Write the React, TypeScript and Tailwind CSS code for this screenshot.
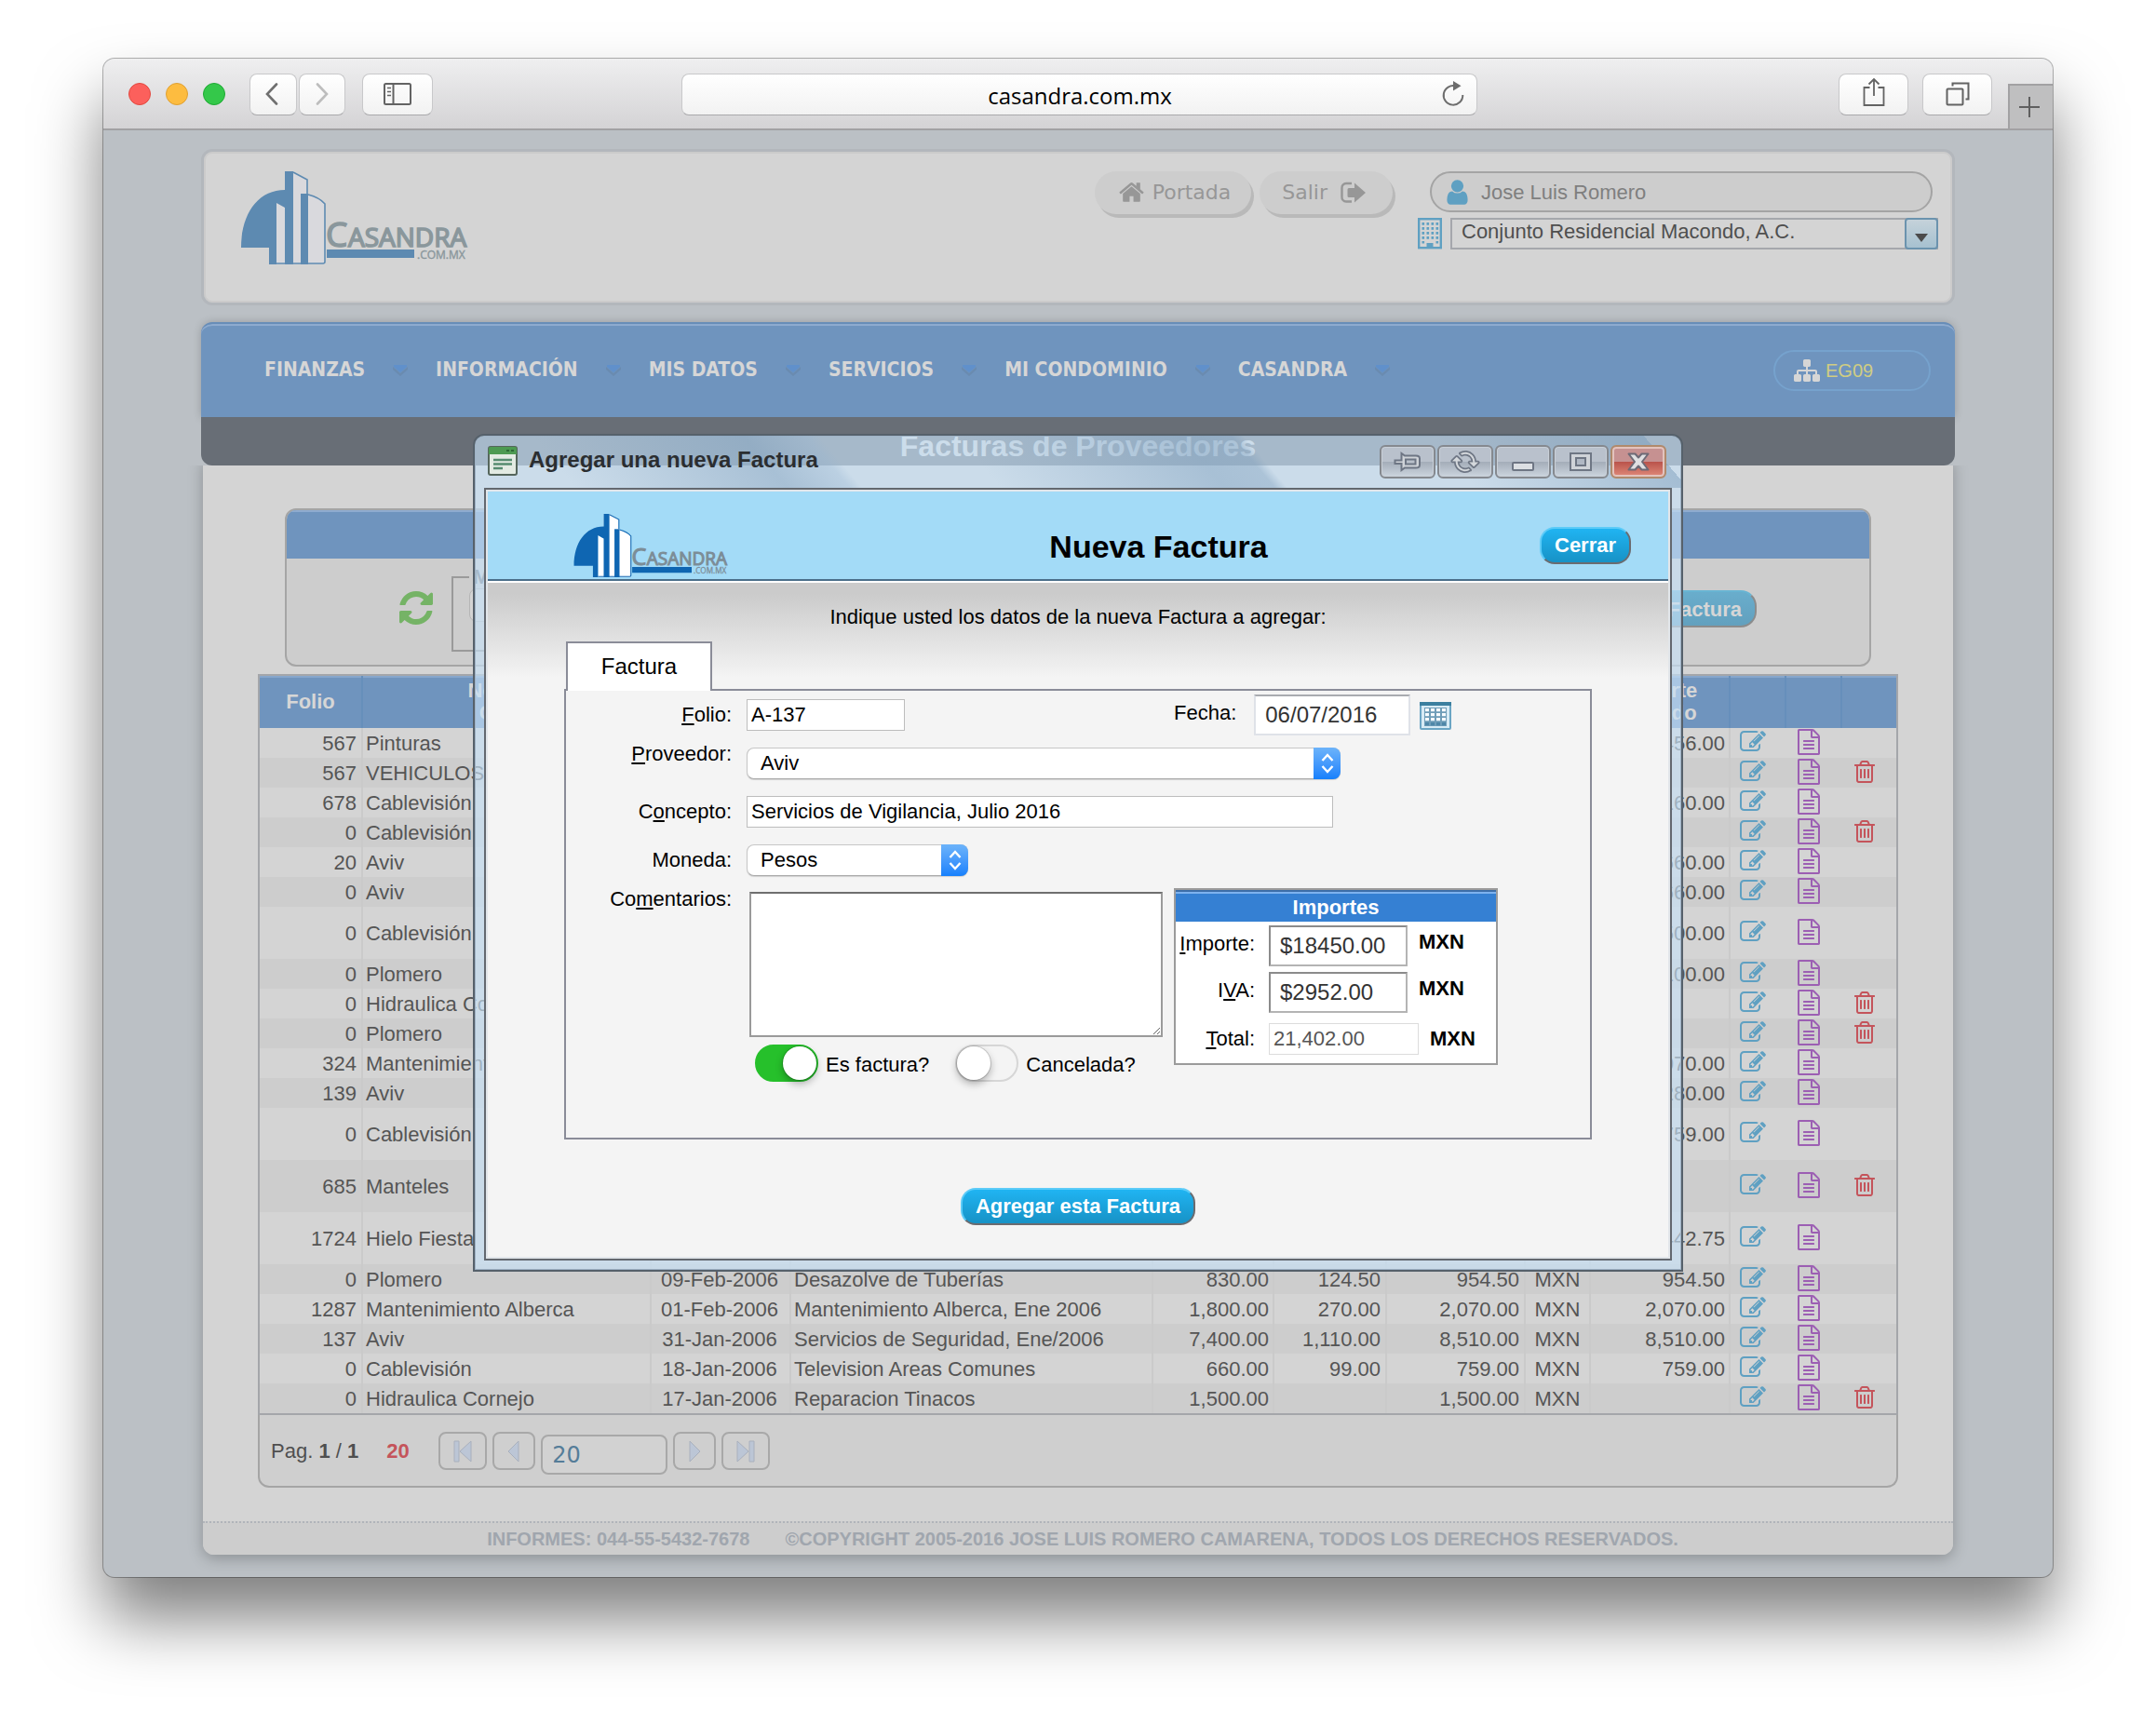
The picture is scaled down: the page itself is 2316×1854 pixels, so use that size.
import type { ReactNode } from 'react'

const ICONS = {
  edit: 'M888 1184l116-116-152-152-116 116v56h96v96h56zm440-720q-16-16-33 1l-350 350q-17 17-1 33t33-1l350-350q17-17 1-33zm80 594v190q0 119-84.5 203.5t-203.5 84.5h-832q-119 0-203.5-84.5t-84.5-203.5v-832q0-119 84.5-203.5t203.5-84.5h832q63 0 117 25 15 7 18 23 3 17-9 29l-49 49q-14 14-32 8-23-6-45-6h-832q-66 0-113 47t-47 113v832q0 66 47 113t113 47h832q66 0 113-47t47-113v-126q0-13 9-22l64-64q15-15 35-7t20 29zm-96-738l288 288-672 672h-288v-288zm444 132l-92 92-288-288 92-92q28-28 68-28t68 28l152 152q28 28 28 68t-28 68z',
  file: 'M1596 380q28 28 48 76t20 88v1152q0 40-28 68t-68 28h-1344q-40 0-68-28t-28-68v-1600q0-40 28-68t68-28h896q40 0 88 20t76 48zm-444-244v376h376q-10-29-22-41l-313-313q-12-12-41-22zm384 1528v-1024h-416q-40 0-68-28t-28-68v-416h-768v1536h1280zm-1024-864q0-14 9-23t23-9h704q14 0 23 9t9 23v64q0 14-9 23t-23 9h-704q-14 0-23-9t-9-23v-64zm736 224q14 0 23 9t9 23v64q0 14-9 23t-23 9h-704q-14 0-23-9t-9-23v-64q0-14 9-23t23-9h704zm0 256q14 0 23 9t9 23v64q0 14-9 23t-23 9h-704q-14 0-23-9t-9-23v-64q0-14 9-23t23-9h704z',
  trash: 'M704 736v576q0 14-9 23t-23 9h-64q-14 0-23-9t-9-23v-576q0-14 9-23t23-9h64q14 0 23 9t9 23zm256 0v576q0 14-9 23t-23 9h-64q-14 0-23-9t-9-23v-576q0-14 9-23t23-9h64q14 0 23 9t9 23zm256 0v576q0 14-9 23t-23 9h-64q-14 0-23-9t-9-23v-576q0-14 9-23t23-9h64q14 0 23 9t9 23zm128 724v-948h-896v948q0 22 7 40.5t14.5 27 10.5 8.5h832q3 0 10.5-8.5t14.5-27 7-40.5zm-672-1076h448l-48-117q-7-9-17-11h-317q-10 2-17 11zm928 32v64q0 14-9 23t-23 9h-96v948q0 83-47 143.5t-113 60.5h-832q-66 0-113-58.5t-47-141.5v-952h-96q-14 0-23-9t-9-23v-64q0-14 9-23t23-9h309l70-167q15-37 54-63t79-26h320q40 0 79 26t54 63l70 167h309q14 0 23 9t9 23z',
  refresh: 'M1639 1056q0 5-1 7-64 268-268 434.5t-478 166.5q-146 0-282.5-55t-243.5-157l-129 129q-19 19-45 19t-45-19-19-45v-448q0-26 19-45t45-19h448q26 0 45 19t19 45-19 45l-137 137q71 66 161 102t187 36q134 0 250-65t186-179q11-17 53-117 8-23 30-23h192q13 0 22.5 9.5t9.5 22.5zm25-800v448q0 26-19 45t-45 19h-448q-26 0-45-19t-19-45 19-45l138-138q-148-137-349-137-134 0-250 65t-186 179q-11 17-53 117-8 23-30 23h-199q-13 0-22.5-9.5t-9.5-22.5v-7q65-268 270-434.5t480-166.5q146 0 284 55.5t245 156.5l130-129q19-19 45-19t45 19 19 45z',
  home: 'M1472 992v480q0 26-19 45t-45 19h-384v-384h-256v384h-384q-26 0-45-19t-19-45v-480q0-1 .5-3t.5-3l575-474 575 474q1 2 1 6zm223-69l-62 74q-8 9-21 11h-3q-13 0-21-7l-692-577-692 577q-12 8-24 7-13-2-21-11l-62-74q-8-10-7-23.5t11-21.5l719-599q32-26 76-26t76 26l244 204v-195q0-14 9-23t23-9h192q14 0 23 9t9 23v408l219 182q10 8 11 21.5t-7 23.5z',
  sitemap: 'M1792 1248v320q0 40-28 68t-68 28h-320q-40 0-68-28t-28-68v-320q0-40 28-68t68-28h96v-192h-512v192h96q40 0 68 28t28 68v320q0 40-28 68t-68 28h-320q-40 0-68-28t-28-68v-320q0-40 28-68t68-28h96v-192h-512v192h96q40 0 68 28t28 68v320q0 40-28 68t-68 28h-320q-40 0-68-28t-28-68v-320q0-40 28-68t68-28h96v-192q0-52 38-90t90-38h512v-192h-96q-40 0-68-28t-28-68v-320q0-40 28-68t68-28h320q40 0 68 28t28 68v320q0 40-28 68t-68 28h-96v192h512q52 0 90 38t38 90v192h96q40 0 68 28t28 68z',
  user: 'M1536 1399q0 109-62.5 187t-150.5 78h-854q-88 0-150.5-78t-62.5-187q0-85 8.5-160.5t31.5-152 58.5-131 94-89 134.5-34.5q131 128 313 128t313-128q76 0 134.5 34.5t94 89 58.5 131 31.5 152 8.5 160.5zm-256-887q0 159-112.5 271.5t-271.5 112.5-271.5-112.5-112.5-271.5 112.5-271.5 271.5-112.5 271.5 112.5 112.5 271.5z',
}

const MENU = ['FINANZAS', 'INFORMACIÓN', 'MIS DATOS', 'SERVICIOS', 'MI CONDOMINIO', 'CASANDRA']

type Row = {
  folio: string
  name: string
  date?: string
  concept?: string
  amount?: string
  tax?: string
  total?: string
  currency?: string
  paid?: string
  trash?: boolean
  tall?: boolean
}

const ROWS: Row[] = [
  { folio: '567', name: 'Pinturas', paid: '456.00' },
  { folio: '567', name: 'VEHICULOS', trash: true },
  { folio: '678', name: 'Cablevisión', paid: '160.00' },
  { folio: '0', name: 'Cablevisión', trash: true },
  { folio: '20', name: 'Aviv', paid: '660.00' },
  { folio: '0', name: 'Aviv', paid: '660.00' },
  { folio: '0', name: 'Cablevisión', paid: '500.00', tall: true },
  { folio: '0', name: 'Plomero', paid: '100.00' },
  { folio: '0', name: 'Hidraulica Cornejo', trash: true },
  { folio: '0', name: 'Plomero', trash: true },
  { folio: '324', name: 'Mantenimiento Alberca', paid: '2,070.00' },
  { folio: '139', name: 'Aviv', paid: '280.00' },
  { folio: '0', name: 'Cablevisión', paid: '759.00', tall: true },
  { folio: '685', name: 'Manteles', trash: true, tall: true },
  { folio: '1724', name: 'Hielo Fiesta', paid: '442.75', tall: true },
  { folio: '0', name: 'Plomero', date: '09-Feb-2006', concept: 'Desazolve de Tuberías', amount: '830.00', tax: '124.50', total: '954.50', currency: 'MXN', paid: '954.50' },
  { folio: '1287', name: 'Mantenimiento Alberca', date: '01-Feb-2006', concept: 'Mantenimiento Alberca, Ene 2006', amount: '1,800.00', tax: '270.00', total: '2,070.00', currency: 'MXN', paid: '2,070.00' },
  { folio: '137', name: 'Aviv', date: '31-Jan-2006', concept: 'Servicios de Seguridad, Ene/2006', amount: '7,400.00', tax: '1,110.00', total: '8,510.00', currency: 'MXN', paid: '8,510.00' },
  { folio: '0', name: 'Cablevisión', date: '18-Jan-2006', concept: 'Television Areas Comunes', amount: '660.00', tax: '99.00', total: '759.00', currency: 'MXN', paid: '759.00' },
  { folio: '0', name: 'Hidraulica Cornejo', date: '17-Jan-2006', concept: 'Reparacion Tinacos', amount: '1,500.00', total: '1,500.00', currency: 'MXN', trash: true },
]

function Icon({ name, className }: { name: keyof typeof ICONS; className: string }) {
  return (
    <svg viewBox="0 0 1792 1792" fill="currentColor" className={className} aria-hidden="true">
      <path d={ICONS[name]} />
    </svg>
  )
}

function Logo({ className, blue, gray, light }: { className: string; blue: string; gray: string; light: string }) {
  return (
    <svg viewBox="0 0 244 100" className={className} role="img" aria-label="Casandra.com.mx">
      <path d="M56 0L71 9V24L90 34V100H38V34L47 39V0z" fill={light} />
      <path d="M0 82C0 46 18 20 47 20V0H56V100H47V39L38 34V100H30V82z" fill={blue} />
      <path d="M64 24H72V100H64z" fill={blue} />
      <path d="M56 1L71 9V24M72 25Q84 28 90 35V97Q90 99 88 99H38" fill="none" stroke={blue} strokeWidth="1.6" />
      <path d="M92 84H186V93H92z" fill={blue} />
      <g fill={gray} className="font-['Open_Sans',sans-serif]">
        <text x="91" y="81" fontSize="37" stroke={gray} strokeWidth="1.6">C</text>
        <text x="115" y="81" fontSize="28" stroke={gray} strokeWidth="1.6">ASANDRA</text>
        <text x="189" y="94" fontSize="12" stroke={gray} strokeWidth="0.4">.COM.MX</text>
      </g>
    </svg>
  )
}

function ToolButton({ label, className, children }: { label: string; className: string; children: ReactNode }) {
  return (
    <button
      type="button"
      aria-label={label}
      className={`flex h-[45px] items-center justify-center rounded-lg border border-[#c8c8ca] border-b-[#a9a9ab] bg-linear-to-b from-white to-[#f2f2f2] ${className}`}
    >
      {children}
    </button>
  )
}

function Toolbar() {
  return (
    <div className="flex h-[77px] items-center rounded-t-xl border-b-2 border-[#a2a1a3] bg-linear-to-b from-[#efeff0] to-[#d4d3d5] pt-px pl-[27px]">
      <div className="flex gap-4">
        <span className="size-6 rounded-full border border-[#e2483f] bg-[#fc605c]" />
        <span className="size-6 rounded-full border border-[#dfa032] bg-[#fdbc40]" />
        <span className="size-6 rounded-full border border-[#1fa934] bg-[#34c84a]" />
      </div>
      <div className="ml-[26px] flex gap-0.5">
        <ToolButton label="Atrás" className="w-[51px]">
          <svg viewBox="0 0 16 24" className="mr-1 h-6 w-4" fill="none" stroke="#6f6f6f" strokeWidth="2.6" strokeLinecap="round">
            <path d="M13 1.5L3 12l10 10.5" />
          </svg>
        </ToolButton>
        <ToolButton label="Adelante" className="w-[50px]">
          <svg viewBox="0 0 16 24" className="h-6 w-4" fill="none" stroke="#bdbdbd" strokeWidth="2.6" strokeLinecap="round">
            <path d="M3 1.5L13 12 3 22.5" />
          </svg>
        </ToolButton>
      </div>
      <ToolButton label="Barra lateral" className="ml-[18px] w-[76px]">
        <svg viewBox="0 0 30 24" className="h-6 w-[30px]" fill="none" stroke="#636363" strokeWidth="2">
          <rect x="1" y="1" width="28" height="22" rx="1.5" />
          <path d="M10.5 1v22" />
          <path d="M4 5.5h4M4 9.5h4M4 13.5h4" strokeWidth="1.6" />
        </svg>
      </ToolButton>
      <div className="flex flex-1 justify-center">
        <div className="mr-[122px] flex h-[45px] w-[855px] items-center rounded-lg border border-[#c8c8ca] border-b-[#a9a9ab] bg-linear-to-b from-white to-[#f2f2f2] pt-1 pr-3 pl-10">
          <input
            aria-label="Dirección"
            defaultValue="casandra.com.mx"
            className="min-w-0 flex-1 bg-transparent text-center font-['Open_Sans','Liberation_Sans',sans-serif] text-2xl text-black outline-none"
          />
          <svg viewBox="0 0 26 28" className="mb-1 h-7 w-[26px]" fill="none" stroke="#6d6d6d" strokeWidth="2">
            <path d="M16 5.5A10.3 10.3 0 1 0 23.3 15" />
            <path d="M13 0l8.5 5.3L13 10.5z" fill="#6d6d6d" stroke="none" />
          </svg>
        </div>
      </div>
      <ToolButton label="Compartir" className="w-[75px]">
        <svg viewBox="0 0 24 32" className="mb-1 h-8 w-6" fill="none" stroke="#636363" strokeWidth="1.8">
          <path d="M7.5 11H1.5v19h21V11h-6M12 20V2M6.5 7.5L12 2l5.5 5.5" />
        </svg>
      </ToolButton>
      <ToolButton label="Pestañas" className="ml-[15px] w-[75px]">
        <svg viewBox="0 0 26 26" className="size-[26px]" fill="none" stroke="#636363" strokeWidth="2">
          <rect x="1.5" y="7.5" width="17" height="17" rx="1" />
          <path d="M7.5 4.5v-3h17v17h-3" />
        </svg>
      </ToolButton>
      <button type="button" aria-label="Nueva pestaña" className="ml-[17px] flex h-[48px] w-12 items-center justify-center self-end border-t-2 border-l-2 border-[#a2a1a3] bg-[#bfbfc0] pr-1">
        <svg viewBox="0 0 22 22" className="size-[22px]" stroke="#5f5f5f" strokeWidth="2">
          <path d="M11 0v22M0 11h22" />
        </svg>
      </button>
    </div>
  )
}

function PageHeader() {
  return (
    <header className="flex h-[168px] items-start rounded-xl border-[3px] border-[#b3b7bc] bg-[#d4d4d4] pt-[21px] pr-[15px] pl-10 inset-ring-2 inset-ring-[#cbcbcb]">
      <Logo className="h-[100px] w-[244px]" blue="#5d8ab1" gray="#8a979c" light="#d9d9dd" />
      <nav className="ml-auto flex gap-[9px] font-['DejaVu_Sans',sans-serif] text-[22px] text-[#979797]">
        <a href="#portada" className="flex h-[46px] items-center gap-2 rounded-full bg-[#cdcdcd] pr-[22px] pb-px pl-[25px] shadow-[3px_4px_0_#b9b9b9]">
          <Icon name="home" className="size-[29px]" />
          Portada
        </a>
        <a href="#salir" className="flex h-[46px] items-center gap-3.5 rounded-full bg-[#cdcdcd] pr-[29px] pb-px pl-6 shadow-[3px_4px_0_#b9b9b9]">
          Salir
          <svg viewBox="0 0 27 24" className="h-6 w-[27px]">
            <path d="M12 2H6a4.5 4.5 0 0 0-4.5 4.5v10A4.500 4.500 0 0 0 6 21.500h6" fill="none" stroke="currentColor" strokeWidth="2.4" />
            <path d="M9 7h6V1.500L27 12 15 22.500V17H9a1.500 1.500 0 0 1-1.500-1.500v-7A1.500 1.500 0 0 1 9 7z" fill="currentColor" />
          </svg>
        </a>
      </nav>
      <div className="ml-[27px] flex flex-col gap-1.5">
        <div className="ml-[13px] flex h-11 w-[540px] items-center gap-2.5 rounded-full border-2 border-[#a4a4a4] bg-[#cdcdcd] pl-3 text-[22px] text-[#7f7f7f]">
          <Icon name="user" className="size-[31px] text-[#5fa0c2]" />
          Jose Luis Romero
        </div>
        <div className="flex items-center gap-[9px]">
          <svg viewBox="0 0 26 34" className="h-[34px] w-[26px] text-[#5fa0c2]" fill="currentColor">
            <rect x="1.2" y="1.2" width="23.6" height="31" fill="none" stroke="currentColor" strokeWidth="2.4" />
            {[5, 10, 15, 20].flatMap((y) => [4.5, 9.5, 14.5, 19.5].map((x) => <rect key={`${x}-${y}`} x={x} y={y} width="2.6" height="2.8" />))}
            <path d="M4.500 25h2.600v2.600h-2.600zM19.500 25h2.600v2.600h-2.600zM9.500 27h7v6h-7z" />
          </svg>
          <div className="relative flex">
            <select aria-label="Condominio" className="h-[34px] w-[524px] appearance-none border-2 border-[#a5a7ac] bg-[#d4d4d4] pb-1 pl-2.5 text-[22px] leading-[26px] text-[#4f4f4f]">
              <option>Conjunto Residencial Macondo, A.C.</option>
            </select>
            <span className="pointer-events-none absolute inset-y-0 right-0 flex w-9 items-center justify-center rounded-sm border-2 border-[#6b93ae] bg-linear-to-b from-[#c5d2da] to-[#a6c1d0] pt-2">
              <svg viewBox="0 0 14 9" className="h-[9px] w-3.5">
                <path d="M0 0h14L7 9z" fill="#4b4b4b" />
              </svg>
            </span>
          </div>
        </div>
      </div>
    </header>
  )
}

function MainNav() {
  return (
    <nav className="flex h-[102px] items-center rounded-t-xl border-t-2 border-[#678db8] bg-[#6f94be] pr-[26px] pl-[68px] shadow-[0_0_10px_rgba(0,0,0,.2)] inset-shadow-[0_2px_0_#8eabcf]">
      {MENU.map((item) => (
        <a key={item} href={`#${item}`} className="flex items-center font-['DejaVu_Sans_Condensed','DejaVu_Sans',sans-serif] text-[21px] font-bold text-[#d6d6d6]">
          {item}
          <svg viewBox="0 0 16 12" className="mx-[30px] h-3 w-4">
            <path d="M0 2v3l8 7 8-7V2L8 9z" fill="#6a8bb0" />
            <path d="M1 0h14v2L8 8 1 2z" fill="#6090cb" />
          </svg>
        </a>
      ))}
      <div className="ml-auto flex h-11 w-[169px] items-center gap-1.5 rounded-full border-2 border-[#76a2cd] pl-5 text-[20px] text-[#d0cd82]">
        <Icon name="sitemap" className="size-7 text-[#d6d6d6]" />
        EG09
      </div>
    </nav>
  )
}

function FilterPanel() {
  return (
    <section className="mx-[29px] overflow-hidden rounded-xl border-2 border-[#a5a5a5] bg-[#cdcdcd]">
      <div className="h-[52px] bg-[#6f94be] inset-shadow-[0_2px_0_#8eabcf]" />
      <div className="flex h-[114px] items-start pr-[121px] pl-[118px]">
        <button type="button" aria-label="Actualizar" className="mt-[32px]">
          <Icon name="refresh" className="size-[42px] text-[#75b366]" />
        </button>
        <fieldset className="mt-[8px] ml-[17px] h-[92px] w-[300px] border-2 border-[#9a9a9a] pl-[17px]">
          <legend className="px-1 text-[22px] leading-6 font-bold text-[#6e747c]">Mes</legend>
          <input aria-label="Mes" className="h-9 w-40 rounded-lg border border-[#b5b5b5] bg-[#d4d4d4]" />
        </fieldset>
        <button type="button" className="mt-[34px] ml-auto h-10 rounded-[17px] border-2 border-t-[#68b4d3] border-r-[#8c8c8c] border-b-[#8c8c8c] border-l-[#68b4d3] bg-linear-to-b from-[#69adcc] to-[#62a0be] px-3.5 pt-0.5 text-[22px] leading-[34px] font-bold text-[#d6d6d6]">
          Agregar Factura
        </button>
      </div>
    </section>
  )
}

function InvoiceTable() {
  const cell = 'border-r-2 border-[#cacaca]'
  const head = 'border-r-2 border-[#668fbb] px-1 inset-shadow-[0_2px_0_#86a6cc]'
  return (
    <table className="w-full table-fixed border-separate border-spacing-0 border-2 border-[#a4a6aa] text-[22px] leading-7 text-[#555]">
      <colgroup>
        <col className="w-[111px]" />
        <col className="w-[310px]" />
        <col className="w-[150px]" />
        <col />
        <col className="w-[130px]" />
        <col className="w-[121px]" />
        <col className="w-[149px]" />
        <col className="w-[70px]" />
        <col className="w-[150px]" />
        <col className="w-[60px]" />
        <col className="w-[60px]" />
        <col className="w-[58px]" />
      </colgroup>
      <thead className="bg-[#6f94be] leading-6 text-[#d6d6d6]">
        <tr className="h-14">
          <th className={head}>Folio</th>
          <th className={head}>Nombre<br />Corto</th>
          <th className={head} />
          <th className={head} />
          <th className={head} />
          <th className={head} />
          <th className={head} />
          <th className={head} />
          <th className={head}>Importe<br />Pagado</th>
          <th className={head} />
          <th className={head} />
          <th className="inset-shadow-[0_2px_0_#86a6cc]" />
        </tr>
      </thead>
      <tbody>
        {ROWS.map((row, i) => (
          <tr key={i} className={`${row.tall ? 'h-14' : 'h-8'} even:bg-[#cdcdcd]`}>
            <td className={`${cell} pt-0.5 pr-[5px] text-right`}>{row.folio}</td>
            <td className={`${cell} pt-0.5 pl-[3px] whitespace-nowrap`}>{row.name}</td>
            <td className={`${cell} pt-0.5 pr-0.5 text-center`}>{row.date}</td>
            <td className={`${cell} pt-0.5 pl-[3px] whitespace-nowrap`}>{row.concept}</td>
            <td className={`${cell} pt-0.5 pr-1 text-right`}>{row.amount}</td>
            <td className={`${cell} pt-0.5 pr-[5px] text-right`}>{row.tax}</td>
            <td className={`${cell} pt-0.5 pr-[5px] text-right`}>{row.total}</td>
            <td className={`${cell} pt-0.5 text-center`}>{row.currency}</td>
            <td className={`${cell} pt-0.5 pr-1 text-right`}>{row.paid}</td>
            <td className="pb-0.5 pl-[10px] text-[#5fa0c2]">
              <button type="button" aria-label="Editar" className="block">
                <Icon name="edit" className="size-7" />
              </button>
            </td>
            <td className="pb-0.5 pl-[10px] text-[#9c5fb3]">
              <button type="button" aria-label="Detalle" className="block">
                <Icon name="file" className="size-7" />
              </button>
            </td>
            <td className="pb-0.5 pl-[10px] text-[#c4545b]">
              {row.trash && (
                <button type="button" aria-label="Eliminar" className="block">
                  <Icon name="trash" className="size-7" />
                </button>
              )}
            </td>
          </tr>
        ))}
      </tbody>
    </table>
  )
}

function PagerButton({ label, d, wide }: { label: string; d: string; wide?: boolean }) {
  return (
    <button type="button" aria-label={label} className={`flex h-[41px] items-center justify-center rounded-lg border-2 border-[#a8a8a8] bg-[#cfcfcf] ${wide ? 'w-[52px]' : 'w-[46px]'}`}>
      <svg viewBox="0 0 20 24" className="h-6 w-5" fill="#bcc6d6" stroke="#a9b0bd" strokeWidth="1">
        <path d={d} />
      </svg>
    </button>
  )
}

function Pager() {
  return (
    <div className="flex h-[78px] items-start rounded-b-xl border-2 border-t-0 border-[#a5a5a5] bg-[#cfcfcf] pt-[18px] pl-3 text-[22px] leading-[42px] text-[#4f4f4f]">
      <p>Pag. <b>1</b> / <b>1</b></p>
      <b className="ml-[30px] w-[24px] text-[#c4545b]">20</b>
      <div className="ml-8 flex gap-1.5">
        <PagerButton wide label="Primera" d="M1 1h5v22H1zM19 1v22L7 12z" />
        <PagerButton label="Anterior" d="M15 1v22L4 12z" />
        <input aria-label="Registros" defaultValue="20" className="mt-[3px] h-[43px] w-[136px] rounded-lg border-2 border-[#a8a8a8] bg-[#d2d2d2] pl-2.5 font-['DejaVu_Sans',sans-serif] text-2xl text-[#557d99]" />
        <PagerButton label="Siguiente" d="M5 1v22l11-11z" />
        <PagerButton wide label="Última" d="M19 1h-5v22h5zM1 1v22l12-11z" />
      </div>
    </div>
  )
}

function BlueButton({ className = '', children }: { className?: string; children: ReactNode }) {
  return (
    <button type="button" className={`h-10 rounded-[16px] border-2 border-t-[#5ccbf8] border-r-[#6b6b6f] border-b-[#6b6b6f] border-l-[#5ccbf8] bg-linear-to-b from-[#20b4f2] to-[#1792c6] px-3.5 text-[22px] leading-9 font-bold whitespace-nowrap text-white ${className}`}>
      {children}
    </button>
  )
}

function MacSelect({ id, value, className }: { id: string; value: string; className: string }) {
  return (
    <div className={`relative ${className}`}>
      <select id={id} className="h-[34px] w-full appearance-none rounded-lg border border-[#c6c6c6] border-b-[#aaa] bg-white pl-3.5 text-[22px] leading-7 text-black shadow-[0_1px_1px_rgba(0,0,0,.15)]">
        <option>{value}</option>
      </select>
      <span className="pointer-events-none absolute inset-y-0 right-0 flex w-[29px] items-center justify-center rounded-r-lg bg-linear-to-b from-[#6cb3fa] to-[#1480fc]">
        <svg viewBox="0 0 14 22" className="h-[22px] w-3.5" fill="none" stroke="white" strokeWidth="2.4">
          <path d="M1.500 8L7 2l5.500 6M1.500 14L7 20l5.500-6" />
        </svg>
      </span>
    </div>
  )
}

function FrameButton({ label, close, children }: { label: string; close?: boolean; children: ReactNode }) {
  return (
    <button
      type="button"
      aria-label={label}
      className={
        close
          ? 'flex h-9 w-[60px] items-center justify-center rounded-md border-2 border-[#b08a6c] bg-linear-to-b from-[#c69191] from-50% via-[#b9534b] via-50% to-[#e08a7a] inset-ring-2 inset-ring-[#e3c3bd]'
          : 'flex h-9 w-[60px] items-center justify-center rounded-md border-2 border-[#85898f] bg-linear-to-b from-[#b9c1cc] from-50% via-[#a3acb8] via-50% to-[#ccd5de] inset-ring-1 inset-ring-[#c9d0d8]'
      }
    >
      {children}
    </button>
  )
}

function TitleBar() {
  return (
    <div className="flex h-14 items-center rounded-t-lg bg-[linear-gradient(50deg,transparent_8%,rgba(125,158,188,.45)_25%,rgba(150,180,208,.3)_30%,transparent_31%,transparent_42%,rgba(125,158,188,.45)_60%,rgba(125,158,188,.4)_64%,transparent_65%,transparent_80%,rgba(125,158,188,.5)_97%,transparent_97%)] pr-4 pb-0.5 pl-3.5">
      <svg viewBox="0 0 32 32" className="size-8">
        <rect x="1" y="1" width="30" height="30" rx="2" fill="#e3ebe3" stroke="#55665c" strokeWidth="2" />
        <path d="M1 2.500Q1 1 3 1h26q2 0 2 1.500V9H1z" fill="#4d9a52" />
        <path d="M20 5h3M25 5h3" stroke="#2c6a35" strokeWidth="2" />
        <path d="M6 15h20M6 19.500h20M6 24h10" stroke="#568c70" strokeWidth="2.5" />
      </svg>
      <h2 className="ml-3 pb-0.5 text-2xl font-bold text-[#2b2e31]">Agregar una nueva Factura</h2>
      <div className="ml-auto flex gap-0.5 pt-0.5">
        <FrameButton label="Fijar">
          <svg viewBox="0 0 30 22" className="h-[22px] w-[30px]" fill="#cfd3d8" stroke="#6e7684" strokeWidth="2">
            <path d="M1.500 9.500h7V2l3.500 2.500h12q4 0 4 3v7q0 3-4 3H12L8.500 20v-7h-7z" />
            <path d="M13 8.500h10.500v5H13z" fill="#b9c0ca" />
          </svg>
        </FrameButton>
        <FrameButton label="Recargar">
          <svg viewBox="0 0 1792 1792" className="size-[26px] rotate-45" fill="#d4d8dc" stroke="#6e7684" strokeWidth="120">
            <path d={ICONS.refresh} />
          </svg>
        </FrameButton>
        <FrameButton label="Minimizar">
          <svg viewBox="0 0 24 22" className="h-[22px] w-6">
            <rect x="1" y="12" width="22" height="8" rx="1" fill="#dcdfe3" stroke="#6e7684" strokeWidth="2" />
          </svg>
        </FrameButton>
        <FrameButton label="Maximizar">
          <svg viewBox="0 0 24 20" className="h-5 w-6" stroke="#6e7684" strokeWidth="2">
            <rect x="1" y="1" width="22" height="18" fill="#cfd3d8" />
            <rect x="7" y="6" width="10" height="8" fill="#b0b8c4" />
          </svg>
        </FrameButton>
        <FrameButton label="Cerrar ventana" close>
          <svg viewBox="0 0 24 20" className="h-5 w-6">
            <path d="M1.500 1.500h7l3.500 4 3.500-4h7L16 10l6.500 8.500h-7l-3.500-4-3.500 4h-7L8 10z" fill="#e0e0e2" stroke="#6e6a76" strokeWidth="2" strokeLinejoin="round" />
          </svg>
        </FrameButton>
      </div>
    </div>
  )
}

function Toggle({ label, checked }: { label: string; checked?: boolean }) {
  return (
    <label className="flex items-center gap-2">
      <input
        type="checkbox"
        defaultChecked={checked}
        className="h-10 w-[68px] appearance-none rounded-full border-2 border-[#d6d6d6] bg-[#f4f4f4] before:block before:size-9 before:rounded-full before:bg-white before:shadow-[0_4px_8px_rgba(0,0,0,.3),0_0_0_1px_rgba(0,0,0,.15)] checked:border-[#26c02b] checked:bg-[#26c02b] checked:before:ml-7"
      />
      <span className="pt-1">{label}</span>
    </label>
  )
}

const labelClass = 'w-[178px] shrink-0 text-right'

function AmountsBox() {
  const label = 'w-[85px] shrink-0 text-right'
  const money = 'h-11 w-[149px] border-2 border-t-[#8b8b8b] border-r-[#b4b4b4] border-b-[#b4b4b4] border-l-[#8b8b8b] bg-white pl-2.5 text-2xl text-[#333]'
  return (
    <section className="mt-0.5 ml-3 h-[190px] w-[348px] border-2 border-[#9b9b9b] bg-white">
      <h4 className="h-[34px] border-t-2 border-[#3d6ea8] bg-[#3580d3] text-center leading-[34px] font-bold text-white inset-shadow-[0_2px_0_#7db2ee]">Importes</h4>
      <div className="mt-1 flex items-start">
        <label htmlFor="importe" className={`${label} pt-1.5`}><u>I</u>mporte:</label>
        <input id="importe" defaultValue="$18450.00" className={`ml-[15px] ${money}`} />
        <b className="ml-3 pt-1">MXN</b>
      </div>
      <div className="mt-1.5 flex items-start">
        <label htmlFor="iva" className={`${label} pt-1.5`}>I<u>V</u>A:</label>
        <input id="iva" defaultValue="$2952.00" className={`ml-[15px] ${money}`} />
        <b className="ml-3 pt-1">MXN</b>
      </div>
      <div className="mt-[11px] flex items-center">
        <label htmlFor="total" className={label}><u>T</u>otal:</label>
        <input id="total" readOnly defaultValue="21,402.00" className="ml-[15px] h-[34px] w-[161px] border border-[#dcdcdc] bg-white pl-1 text-[22px] text-[#555]" />
        <b className="ml-3">MXN</b>
      </div>
    </section>
  )
}

function InvoiceForm() {
  const text = 'h-[34px] border border-[#bdbdbd] bg-white pl-1 text-[22px] text-black'
  return (
    <form className="px-[82px] pb-[34px]">
      <div className="relative z-10 -mb-0.5 ml-0.5 flex">
        <button type="button" role="tab" aria-selected="true" className="h-[53px] w-[157px] border-2 border-b-0 border-[#8a8c98] bg-white pb-0.5 text-2xl">
          Factura
        </button>
      </div>
      <div className="h-[484px] border-2 border-[#8a8c98] pt-1">
        <div className="flex items-start">
          <label htmlFor="folio" className={`${labelClass} pt-2`}><u>F</u>olio:</label>
          <input id="folio" defaultValue="A-137" className={`mt-[5px] ml-4 w-[170px] ${text}`} />
          <label htmlFor="fecha" className="ml-[289px] pt-1.5">Fecha:</label>
          <input id="fecha" defaultValue="06/07/2016" className="ml-[19px] h-11 w-[168px] border-2 border-[#dfe2e8] border-t-[#a9abb0] bg-white pl-2.5 text-2xl text-[#333]" />
          <button type="button" aria-label="Calendario" className="mt-2 ml-2.5">
            <svg viewBox="0 0 34 30" className="h-[30px] w-[34px]">
              <rect x="1" y="1" width="32" height="28" rx="1" fill="#d7ebf5" stroke="#6aa5c4" strokeWidth="2" />
              <path d="M0 0h34v4H0z" fill="#3b7f9f" />
              <path d="M5 6h24v20H5z" fill="#6f9db8" />
              {[7, 12, 17, 22].flatMap((y) => [6, 12, 18, 24].map((x) => <rect key={`${x}-${y}`} x={x} y={y} width="4" height="3.2" fill={y > 20 ? '#4e87a8' : '#f7fcff'} />))}
            </svg>
          </button>
        </div>
        <div className="mt-1.5 flex items-start">
          <label htmlFor="proveedor" className={labelClass}><u>P</u>roveedor:</label>
          <MacSelect id="proveedor" value="Aviv" className="mt-[7px] ml-4 w-[638px]" />
        </div>
        <div className="mt-[18px] flex items-center">
          <label htmlFor="concepto" className={labelClass}>C<u>o</u>ncepto:</label>
          <input id="concepto" defaultValue="Servicios de Vigilancia, Julio 2016" className={`ml-4 w-[630px] ${text}`} />
        </div>
        <div className="mt-[18px] flex items-center">
          <label htmlFor="moneda" className={labelClass}>Moneda:</label>
          <MacSelect id="moneda" value="Pesos" className="ml-4 w-[238px]" />
        </div>
        <div className="mt-[11px] flex items-start">
          <label htmlFor="comentarios" className={labelClass}>Co<u>m</u>entarios:</label>
          <div className="ml-[19px]">
            <textarea id="comentarios" className="mt-1.5 block h-[156px] w-[444px] border-2 border-[#9a9a9a] border-t-[#6f6f6f] bg-white" />
            <div className="mt-2 flex gap-7 pl-1.5">
              <Toggle label="Es factura?" checked />
              <Toggle label="Cancelada?" />
            </div>
          </div>
          <AmountsBox />
        </div>
      </div>
      <div className="mt-[52px] flex justify-center">
        <BlueButton>Agregar esta Factura</BlueButton>
      </div>
    </form>
  )
}

function InvoiceDialog() {
  return (
    <div role="dialog" aria-label="Agregar una nueva Factura" className="w-[1300px] rounded-t-xl border-2 border-[#56616b] bg-[rgba(199,224,246,.66)] inset-ring-1 inset-ring-[#9fb2c5]">
      <TitleBar />
      <div className="mx-[10px] mb-[10px] border-2 border-[#63686f] bg-[#e2e6ea] p-0.5 text-[22px] leading-7 text-black">
        <div className="grid h-24 grid-cols-[311px_1fr_138px] items-start border-b-2 border-[#4b6f8a] bg-[#a3dbf7]">
          <Logo className="mt-[24px] ml-[92px] h-[68px] w-[167px]" blue="#0f66b2" gray="#7c8d97" light="#ffffff" />
          <h3 className="pt-[39px] text-center text-[34px] leading-10 font-bold">Nueva Factura</h3>
          <BlueButton className="mt-[38px] w-[98px]">Cerrar</BlueButton>
        </div>
        <div className="bg-[linear-gradient(to_bottom,#fff_2px,#cbcbcb_2px,#cbcbcb_14px,#f4f4f4_104px)]">
          <p className="pt-[25px] pb-3 text-center">Indique usted los datos de la nueva Factura a agregar:</p>
          <InvoiceForm />
        </div>
      </div>
    </div>
  )
}

export default function App() {
  return (
    <div className="bg-white px-[111px] pt-[63px] pb-[160px] font-['Liberation_Sans',Arial,sans-serif]">
      <div className="relative rounded-xl bg-[#bbc0c5] shadow-[0_0_0_1px_rgba(0,0,0,.3),0_45px_70px_rgba(0,0,0,.5)]">
        <Toolbar />
        <div className="px-[105px] pt-5 pb-6">
          <PageHeader />
          <div className="mt-[18px]">
            <MainNav />
            <h1 className="h-[52px] rounded-b-xl bg-[#686e76] text-center text-[32px] leading-[62px] font-bold text-[#d6d6d6]">Facturas de Proveedores</h1>
          </div>
          <main className="mx-0.5 -mt-2 rounded-b-xl bg-[#d4d4d4] shadow-[0_4px_16px_rgba(0,0,0,.25)] [clip-path:inset(8px_-20px_-30px_-20px)]">
            <div className="px-[59px] pt-[54px]">
              <FilterPanel />
              <div className="mt-2">
                <InvoiceTable />
                <Pager />
              </div>
            </div>
            <footer className="mt-[36px] flex h-[36px] justify-center gap-[38px] rounded-b-xl border-t-2 border-dotted border-[#b0b4ba] bg-[#cdcdcd] pl-2.5 text-[20px] leading-[34px] font-bold text-[#a0a6ae]">
              <span>INFORMES: 044-55-5432-7678</span>
              <span>©COPYRIGHT 2005-2016 JOSE LUIS ROMERO CAMARENA, TODOS LOS DERECHOS RESERVADOS.</span>
            </footer>
          </main>
        </div>
        <div className="absolute inset-x-0 top-[403px] flex justify-center">
          <InvoiceDialog />
        </div>
      </div>
    </div>
  )
}
